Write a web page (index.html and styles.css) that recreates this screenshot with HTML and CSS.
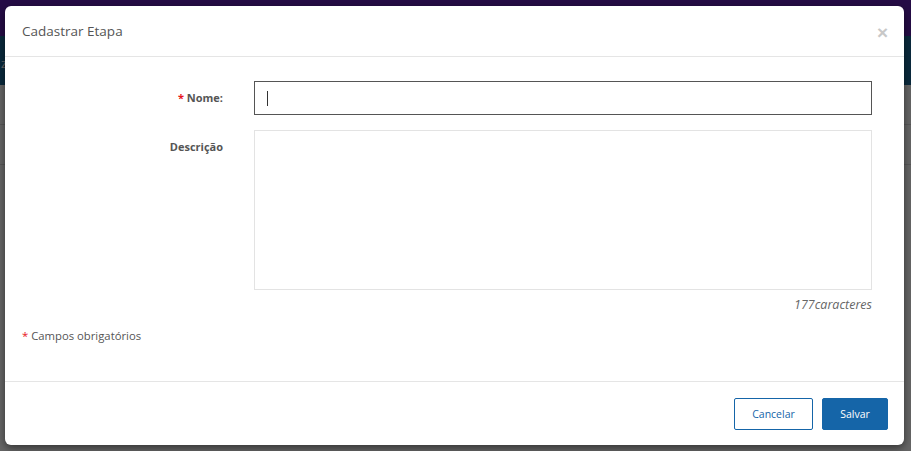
FILE: index.html
```html
<!DOCTYPE html>
<html lang="pt-BR">
<head>
  <meta charset="UTF-8">
  <meta name="viewport" content="width=device-width, initial-scale=1.0">
  <title>Cadastrar Etapa</title>
  <link rel="stylesheet" href="styles.css">
</head>
<body>
  <div class="page">
    <div class="topbar"></div>
    <div class="subbar"><span class="ghost">z</span></div>
    <div class="content">
      <div class="ghost-row"></div>
      <div class="ghost-row"></div>
    </div>
  </div>

  <!-- modal over dimmed page -->
  <div class="backdrop"></div>
  <div class="modal">
    <div class="modal-header">
      <h4 class="modal-title">Cadastrar Etapa</h4>
      <button class="close">&times;</button>
    </div>
    <div class="modal-body">
      <div class="form-row">
        <label class="label"><span class="req">*</span> Nome:</label>
        <div class="input focused"><span class="caret"></span></div>
      </div>
      <div class="form-row">
        <label class="label">Descrição</label>
        <div class="field">
          <div class="textarea"></div>
          <div class="counter">177caracteres</div>
        </div>
      </div>
      <p class="required-note"><span class="req">*</span> Campos obrigatórios</p>
    </div>
    <div class="modal-footer">
      <button class="btn btn-outline">Cancelar</button>
      <button class="btn btn-primary">Salvar</button>
    </div>
  </div>
</body>
</html>
```

FILE: styles.css
```css
* { box-sizing: border-box; }
body {
  margin: 0;
  font-family: "Open Sans", "Noto Sans", sans-serif;
  background: #fff;
  height: 451px;
  overflow: hidden;
}
.page { height: 100%; }
.topbar { height: 36px; background: #5c1fb0; }
.subbar {
  height: 49px;
  background: #1a6a9a;
  color: #fff;
  font-size: 13px;
  padding: 18px 0 0 1px;
}
.content { background: #fff; height: 366px; }
.ghost-row { height: 40px; border-bottom: 1px solid #ddd; }
.backdrop {
  position: absolute;
  inset: 0;
  background: rgba(0, 0, 0, 0.6);
}
.modal {
  position: absolute;
  left: 5px;
  top: 6px;
  width: 899px;
  height: 439px;
  background: #fff;
  border-radius: 6px;
  box-shadow: 0 3px 9px rgba(0,0,0,0.5);
  display: flex;
  flex-direction: column;
}
.modal-header {
  height: 51px;
  border-bottom: 1px solid #e5e5e5;
  display: flex;
  align-items: center;
  justify-content: space-between;
  padding: 0 17px 0 17px;
}
.modal-title {
  margin: 0;
  font-size: 13.5px;
  font-weight: normal;
  color: #555;
}
.close {
  border: none;
  background: none;
  font-size: 19px;
  font-weight: bold;
  color: #c8c8c8;
  padding: 0;
  margin-top: 3px;
  margin-right: -1px;
  cursor: pointer;
}
.modal-body {
  flex: 1;
  padding: 24px 32px 0 17px;
}
.form-row {
  display: grid;
  grid-template-columns: 201px 1fr;
  column-gap: 31px;
  margin-bottom: 15px;
}
.label {
  text-align: right;
  font-size: 11px;
  font-weight: bold;
  color: #555;
  padding-top: 8px;
  line-height: 18px;
}
.req { color: #e8151b; }
.input {
  height: 34px;
  border: 1px solid #555;
  padding: 9px 12px;
}
.caret {
  display: block;
  width: 1px;
  height: 15px;
  background: #333;
}
.textarea {
  height: 160px;
  border: 1px solid #e3e3e3;
}
.counter {
  text-align: right;
  font-size: 12.5px;
  font-style: italic;
  color: #666;
  margin-top: 6px;
}
.required-note {
  margin: 14px 0 0 0;
  font-size: 11.3px;
  color: #555;
}
.modal-footer {
  height: 64px;
  border-top: 1px solid #e5e5e5;
  display: flex;
  justify-content: flex-end;
  align-items: center;
  gap: 9px;
  padding: 0 16px 0 0;
}
.btn {
  height: 32px;
  font-family: inherit;
  font-size: 10.5px;
  border-radius: 2px;
  cursor: pointer;
}
.btn-outline {
  width: 79px;
  background: #fff;
  color: #1565a8;
  border: 1px solid #1565a8;
}
.btn-primary {
  width: 66px;
  background: #1565a8;
  color: #fff;
  border: 1px solid #1565a8;
}
```
